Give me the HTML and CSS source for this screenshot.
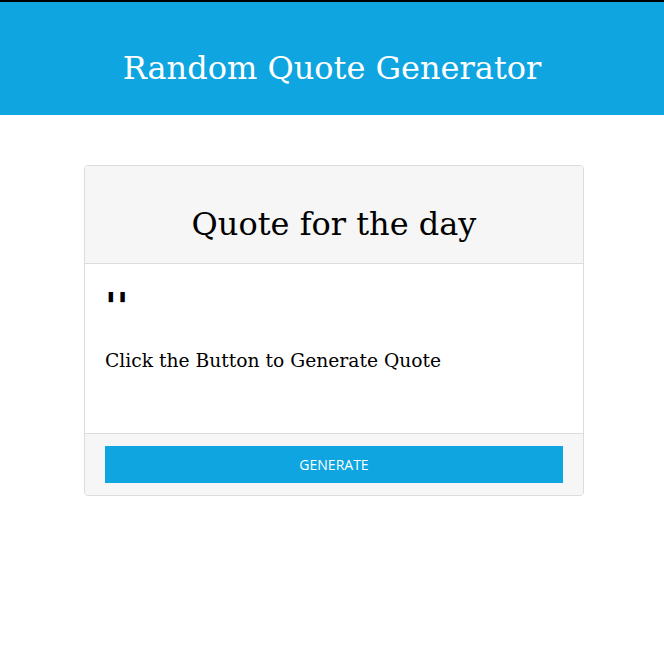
FILE: index.html
```html
<!DOCTYPE html>
<html>
<head>
<meta charset="utf-8">
<link rel="stylesheet" href="styles.css">
</head>
<body>
<div class="topline"></div>
<header class="banner">
  <h1 class="banner-title">Random Quote Generator</h1>
</header>
<main class="main">
  <section class="card">
    <div class="card-head">
      <h2 class="card-title">Quote for the day</h2>
    </div>
    <div class="card-body">
      <div class="quote-mark">''</div>
      <p class="quote-text">Click the Button to Generate Quote</p>
    </div>
    <div class="card-foot">
      <button class="btn">GENERATE</button>
    </div>
  </section>
</main>
</body>
</html>
```
FILE: styles.css
```css
html, body {
  margin: 0;
  padding: 0;
  background: #fff;
  font-family: "DejaVu Serif", serif;
}
.topline {
  height: 2px;
  background: #000;
}
.banner {
  background: #0ea5e1;
  height: 113px;
  box-sizing: border-box;
  padding-top: 18px;
  display: flex;
  align-items: center;
  justify-content: center;
}
.banner-title {
  margin: 0;
  color: #fff;
  font-weight: normal;
  font-size: 32px;
}
.main {
  display: flex;
  justify-content: center;
  padding-top: 50px;
  padding-left: 4px;
}
.card {
  width: 498px;
  border: 1px solid #dcdcdc;
  border-radius: 4px;
  overflow: hidden;
}
.card-head {
  background: #f6f6f6;
  height: 98px;
  border-bottom: 1px solid #dcdcdc;
  display: flex;
  align-items: center;
  justify-content: center;
  padding-top: 19px;
  box-sizing: border-box;
}
.card-title {
  margin: 0;
  font-weight: normal;
  font-size: 32px;
  color: #000;
}
.card-body {
  height: 169px;
  box-sizing: border-box;
  padding: 20px 20px;
}
.quote-mark {
  font-family: "DejaVu Sans", sans-serif;
  font-weight: bold;
  font-size: 38px;
  line-height: 38px;
  height: 38px;
  margin-top: 3px;
}
.quote-text {
  margin: 25px 0 0;
  font-size: 18.7px;
}
.card-foot {
  background: #f6f6f6;
  border-top: 1px solid #dcdcdc;
  padding: 12px 20px 12px;
}
.btn {
  display: block;
  width: 100%;
  height: 37px;
  border: none;
  background: #0ea5e1;
  color: #fff;
  font-family: "Open Sans", sans-serif;
  font-size: 14px;
  cursor: pointer;
}
```
